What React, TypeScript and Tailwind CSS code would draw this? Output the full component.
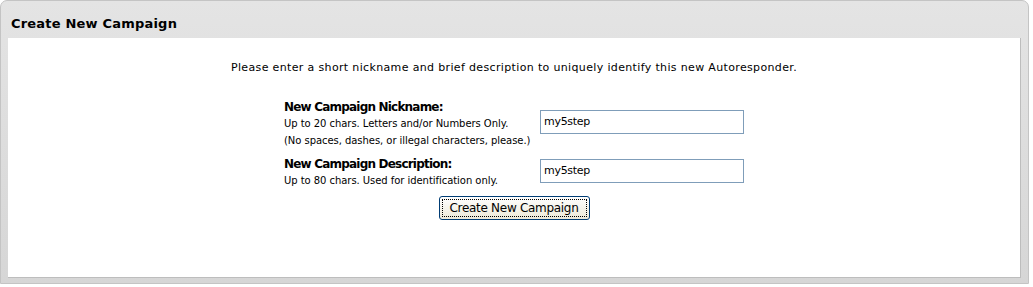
import React from "react";

export default function App() {
  return (
    <div className="w-[1033px] h-[287px] bg-white" style={{ fontFamily: "'DejaVu Sans', Verdana, sans-serif" }}>
      <div className="w-[1029px] h-[284px] rounded-tl-[7px] rounded-tr-[7px] bg-[linear-gradient(to_bottom,#e4e4e4,#d6d6d6)] border border-[#c4c4c4] flex flex-col">
        <div className="h-[37px] flex items-end pl-[10px] pb-[5px]">
          <span className="text-[13px] font-bold text-black tracking-[0.2px]">Create New Campaign</span>
        </div>
        <div className="mx-[7px] h-[240px] bg-white border-r border-b border-[#bdbdbd] flex flex-col items-center">
          <p className="mt-[22px] text-[11px] text-black tracking-[0.35px]">
            Please enter a short nickname and brief description to uniquely identify this new Autoresponder.
          </p>
          <div className="mt-[23px] grid grid-cols-[256px_204px] gap-y-[11px] items-start">
            <div className="flex flex-col">
              <span className="text-[12px] font-bold leading-[15px] tracking-[-0.8px]">New Campaign Nickname:</span>
              <span className="text-[10px] leading-[17px] tracking-[-0.05px]">Up to 20 chars. Letters and/or Numbers Only.</span>
              <span className="text-[10px] leading-[17px] mb-[-3px] tracking-[-0.05px]">(No spaces, dashes, or illegal characters, please.)</span>
            </div>
            <input
              defaultValue="my5step"
              className="mt-[10px] h-[24px] w-[204px] border border-[#7f9db9] px-[3px] text-[11px] outline-none tracking-[-0.3px]"
            />
            <div className="flex flex-col">
              <span className="text-[12px] font-bold leading-[15px] tracking-[-0.8px]">New Campaign Description:</span>
              <span className="text-[10px] leading-[17px] tracking-[-0.05px]">Up to 80 chars. Used for identification only.</span>
            </div>
            <input
              defaultValue="my5step"
              className="mt-[2px] h-[24px] w-[204px] border border-[#7f9db9] px-[3px] text-[11px] outline-none tracking-[-0.3px]"
            />
          </div>
          <button className="mt-[7px] h-[24px] w-[151px] rounded-[3px] border border-[#003c74] bg-[linear-gradient(to_bottom,#ffffff,#ece9d8)] p-[2px]">
            <span className="flex h-full w-full items-center justify-center border border-dotted border-black text-[12px] tracking-[-0.3px]">
              Create New Campaign
            </span>
          </button>
        </div>
      </div>
    </div>
  );
}
